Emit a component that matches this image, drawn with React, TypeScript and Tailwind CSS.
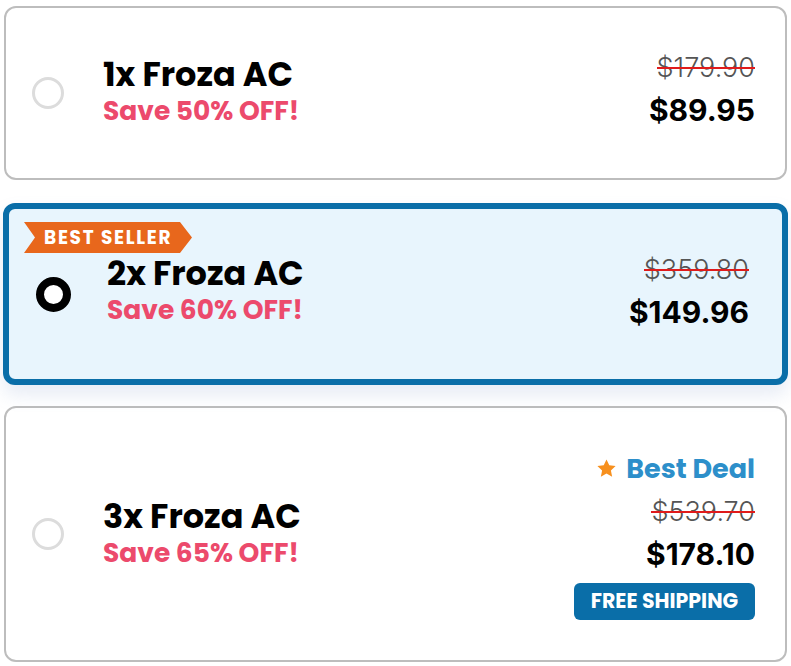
import React from "react";

type Offer = {
  qty: string;
  save: string;
  was: string;
  now: string;
};

const offers: Offer[] = [
  { qty: "1x Froza AC", save: "Save 50% OFF!", was: "$179.90", now: "$89.95" },
  { qty: "2x Froza AC", save: "Save 60% OFF!", was: "$359.80", now: "$149.96" },
  { qty: "3x Froza AC", save: "Save 65% OFF!", was: "$539.70", now: "$178.10" },
];

const head = { fontFamily: "Poppins, Inter, 'Noto Sans', sans-serif" };
const num = { fontFamily: "Inter, Roboto, 'Liberation Sans', sans-serif" };

function Title({ o }: { o: Offer }) {
  return (
    <div className="flex flex-col" style={head}>
      <span className="text-[33.5px] font-bold leading-[40px] text-black">{o.qty}</span>
      <span className="text-[26.5px] font-bold leading-[32px] text-[#ec4a6c]">{o.save}</span>
    </div>
  );
}

function Prices({ o }: { o: Offer }) {
  return (
    <div className="flex flex-col items-end" style={num}>
      <span className="relative text-[27px] leading-[32px] text-[#555] font-light">
        {o.was}
        <span className="absolute left-0 right-0 top-[15px] h-[2px] bg-[#e01b1b]" />
      </span>
      <span className="mt-[8px] text-[30px] font-bold leading-[36px] text-black">{o.now}</span>
    </div>
  );
}

export default function App() {
  return (
    <div className="min-h-screen bg-white px-[4px] pt-[6px]">
      {/* 1x */}
      <div className="flex h-[174px] items-center rounded-[12px] border-2 border-[#bdbdbd] bg-white pl-[26px] pr-[30px]">
        <div className="h-[32px] w-[32px] rounded-full border-[3px] border-[#dcdcdc]" />
        <div className="ml-[39px] flex-1 -mt-[4px]">
          <Title o={offers[0]} />
        </div>
        <div className="-mt-[6px]">
          <Prices o={offers[0]} />
        </div>
      </div>

      {/* 2x */}
      <div className="relative -mx-[1px] mt-[23px] flex h-[182px] items-center rounded-[12px] border-[6px] border-[#0a6ea8] bg-[#e8f5fd] pl-[27px] pr-[33px] shadow-[0_10px_18px_rgba(120,150,200,0.18)]">
        <div
          className="absolute left-[15px] top-[13px] flex h-[31px] w-[168px] items-center bg-[#e8671c] pl-[20px] [clip-path:polygon(0_0,calc(100%-12px)_0,100%_50%,calc(100%-12px)_100%,0_100%,11px_50%)]"
          style={head}
        >
          <span className="text-[18.5px] font-bold tracking-[1.7px] text-white">BEST SELLER</span>
        </div>
        <div className="h-[35px] w-[35px] rounded-full border-[8px] border-black bg-white" />
        <div className="ml-[36px] flex-1 -mt-[8px]">
          <Title o={offers[1]} />
        </div>
        <div className="-mt-[4px]">
          <Prices o={offers[1]} />
        </div>
      </div>

      {/* 3x */}
      <div className="mt-[21px] flex h-[256px] items-center rounded-[12px] border-2 border-[#bdbdbd] bg-white pl-[26px] pr-[30px]">
        <div className="h-[32px] w-[32px] rounded-full border-[3px] border-[#dcdcdc]" />
        <div className="ml-[39px] flex-1 -mt-[2px]">
          <Title o={offers[2]} />
        </div>
        <div className="flex flex-col items-end mt-[3px]">
          <div className="mb-[10px] flex items-center gap-[8px]" style={head}>
            <svg width="23" height="23" viewBox="0 0 24 24">
              <path
                d="M12 2.5l2.9 6.1 6.6.8-4.9 4.6 1.3 6.6L12 17.3l-5.9 3.3 1.3-6.6-4.9-4.6 6.6-.8z"
                fill="#f7901e"
              />
            </svg>
            <span className="text-[27px] font-bold leading-[34px] text-[#2d8fca]">Best Deal</span>
          </div>
          <Prices o={offers[2]} />
          <div
            className="mt-[11px] flex h-[37px] w-[181px] items-center justify-center rounded-[6px] bg-[#0a6ea8]"
            style={head}
          >
            <span className="text-[20.5px] font-bold text-white">FREE SHIPPING</span>
          </div>
        </div>
      </div>
    </div>
  );
}
